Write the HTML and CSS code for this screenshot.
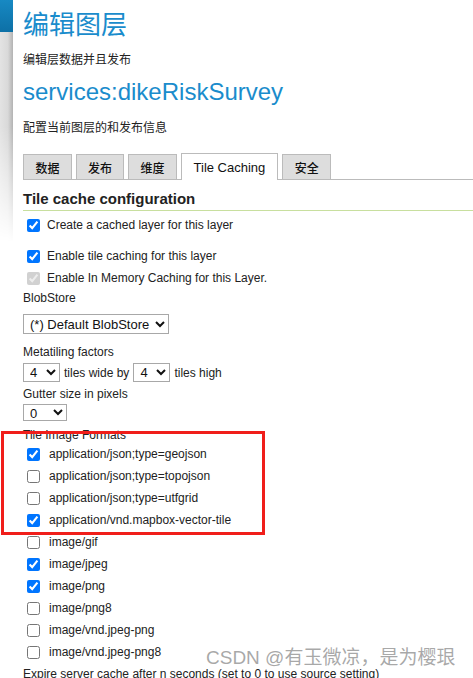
FILE: index.html
```html
<!DOCTYPE html>
<html lang="zh-CN">
<head>
<meta charset="utf-8">
<title>编辑图层</title>
<link rel="stylesheet" href="styles.css">
</head>
<body>
<div class="shell">
  <div class="rail">
    <div class="rail-top"></div>
    <div class="rail-shade"></div>
  </div>
  <main class="panel">
    <h1 class="title">编辑图层</h1>
    <p class="desc desc-first">编辑层数据并且发布</p>
    <h2 class="layer-name">services:dikeRiskSurvey</h2>
    <p class="desc desc-second">配置当前图层的和发布信息</p>

    <ul class="tabs">
      <li class="tab cjk">数据</li>
      <li class="tab cjk">发布</li>
      <li class="tab cjk">维度</li>
      <li class="tab tab-active">Tile Caching</li>
      <li class="tab cjk">安全</li>
    </ul>

    <section class="config">
      <h3 class="config-title">Tile cache configuration</h3>

      <label class="check"><input type="checkbox" checked><span>Create a cached layer for this layer</span></label>
      <label class="check check-spaced"><input type="checkbox" checked><span>Enable tile caching for this layer</span></label>
      <label class="check"><input type="checkbox" checked disabled><span>Enable In Memory Caching for this Layer.</span></label>

      <div class="field-label label-blob">BlobStore</div>
      <div class="field">
        <select class="sel sel-blob"><option>(*) Default BlobStore</option></select>
      </div>

      <div class="field-label label-meta">Metatiling factors</div>
      <div class="field field-inline">
        <select class="sel sel-small"><option>4</option></select>
        <span>tiles wide by</span>
        <select class="sel sel-small"><option>4</option></select>
        <span>tiles high</span>
      </div>

      <div class="field-label label-gutter">Gutter size in pixels</div>
      <div class="field">
        <select class="sel sel-gutter"><option>0</option></select>
      </div>

      <div class="field-label label-formats">Tile Image Formats</div>
      <div class="formats">
        <div class="highlight">
          <label class="check fmt"><input type="checkbox" checked><span>application/json;type=geojson</span></label>
          <label class="check fmt"><input type="checkbox"><span>application/json;type=topojson</span></label>
          <label class="check fmt"><input type="checkbox"><span>application/json;type=utfgrid</span></label>
          <label class="check fmt"><input type="checkbox" checked><span>application/vnd.mapbox-vector-tile</span></label>
        </div>
        <label class="check fmt"><input type="checkbox"><span>image/gif</span></label>
        <label class="check fmt"><input type="checkbox" checked><span>image/jpeg</span></label>
        <label class="check fmt"><input type="checkbox" checked><span>image/png</span></label>
        <label class="check fmt"><input type="checkbox"><span>image/png8</span></label>
        <label class="check fmt"><input type="checkbox"><span>image/vnd.jpeg-png</span></label>
        <label class="check fmt"><input type="checkbox"><span>image/vnd.jpeg-png8</span></label>
      </div>

      <div class="field-label label-expire">Expire server cache after n seconds (set to 0 to use source setting)</div>
    </section>
  </main>
</div>
<div class="watermark">CSDN @有玉微凉，是为樱珢</div>
</body>
</html>
```

FILE: styles.css
```css
html, body {
  margin: 0;
  padding: 0;
  background: #fff;
  overflow: hidden;
}

body {
  font-family: "Liberation Sans", "Noto Sans CJK SC", sans-serif;
  font-size: 12px;
  color: #222;
  position: relative;
  height: 678px;
}

.shell {
  display: flex;
  min-height: 678px;
}

.rail {
  flex: 0 0 13px;
  display: flex;
  flex-direction: column;
}

.rail-top {
  height: 32px;
  background: linear-gradient(#1789c3, #0d70a6);
}

.rail-shade {
  height: 210px;
  background: linear-gradient(to right, #e3e3e3 0, #d9d9d9 60%, #b3b3b3 100%);
  -webkit-mask-image: linear-gradient(to bottom, #000 45%, transparent);
  mask-image: linear-gradient(to bottom, #000 45%, transparent);
}

.panel {
  flex: 1;
  background: #fff;
  border-top-left-radius: 7px;
  padding: 10px 0 0 10px;
  min-width: 0;
}

.title {
  margin: 0;
  font-size: 26px;
  line-height: 30px;
  font-weight: 400;
  color: #1a8ccc;
}

.desc {
  margin: 0;
  font-size: 12px;
  line-height: 16px;
  color: #222;
}

.desc-first {
  margin-top: 12px;
}

.layer-name {
  margin: 10px 0 0;
  font-size: 24px;
  line-height: 28px;
  font-weight: 400;
  color: #1a8ccc;
}

.desc-second {
  margin-top: 14px;
}

.tabs {
  list-style: none;
  margin: 17px 0 0;
  padding: 0;
  display: flex;
  align-items: flex-end;
  gap: 4px;
  border-bottom: 1px solid #bbb;
}

.tab {
  box-sizing: border-box;
  height: 25px;
  padding: 0 11px;
  display: flex;
  align-items: center;
  background: #dddddd;
  border: 1px solid #bbb;
  border-bottom: none;
  font-size: 13px;
  color: #111;
}

.tab.cjk {
  font-size: 12px;
  padding: 0 11px 0 11.5px;
  font-weight: 500;
}

.tab-active {
  height: 27px;
  margin-bottom: -1px;
  background: #fff;
  padding: 0 12px;
}

.config-title {
  margin: 10px 0 0;
  padding-bottom: 2px;
  font-size: 15px;
  line-height: 18px;
  font-weight: 700;
  color: #222;
  border-bottom: 1px solid #c8df9e;
}

.check {
  display: flex;
  align-items: center;
  height: 22px;
  color: #222;
}

.check input {
  margin: 3px 3px 3px 4px;
}

.check span {
  margin-left: 4px;
}

.config-title + .check {
  margin-top: 3px;
}

.check-spaced {
  margin-top: 9px;
}

.fmt span {
  margin-left: 6px;
}

.field-label {
  line-height: 16px;
  color: #222;
}

.label-blob {
  margin-top: 1px;
}

.field {
  margin-top: 8px;
}

.field-inline {
  display: flex;
  align-items: center;
  gap: 4px;
  margin-top: 3px;
}

.label-meta {
  margin-top: 10px;
}

.label-gutter {
  margin-top: 4px;
}

.label-gutter + .field {
  margin-top: 2px;
}

.label-formats {
  margin-top: 6px;
}

.label-expire {
  margin-top: 3px;
  white-space: nowrap;
}

.sel {
  box-sizing: border-box;
  font-family: "Liberation Sans", sans-serif;
  font-size: 13px;
  color: #111;
  background: #fff;
  border: 1px solid #a8a8a8;
  border-radius: 0;
  padding: 0 2px;
  margin: 0;
  display: block;
}

.sel-blob {
  width: 146px;
  height: 20px;
}

.sel-small {
  width: 37px;
  height: 19px;
}

.sel-gutter {
  width: 44px;
  height: 17px;
}

.highlight {
  position: relative;
}

.highlight::after {
  content: "";
  position: absolute;
  left: -22px;
  top: -12px;
  width: 264px;
  height: 104px;
  box-sizing: border-box;
  border: 3px solid #f01e1a;
  pointer-events: none;
}

.watermark {
  position: absolute;
  left: 206px;
  top: 648px;
  font-family: "Liberation Sans", "Noto Sans CJK SC", sans-serif;
  font-size: 19px;
  line-height: 19px;
  color: rgba(140, 140, 140, 0.75);
  white-space: nowrap;
}
```
